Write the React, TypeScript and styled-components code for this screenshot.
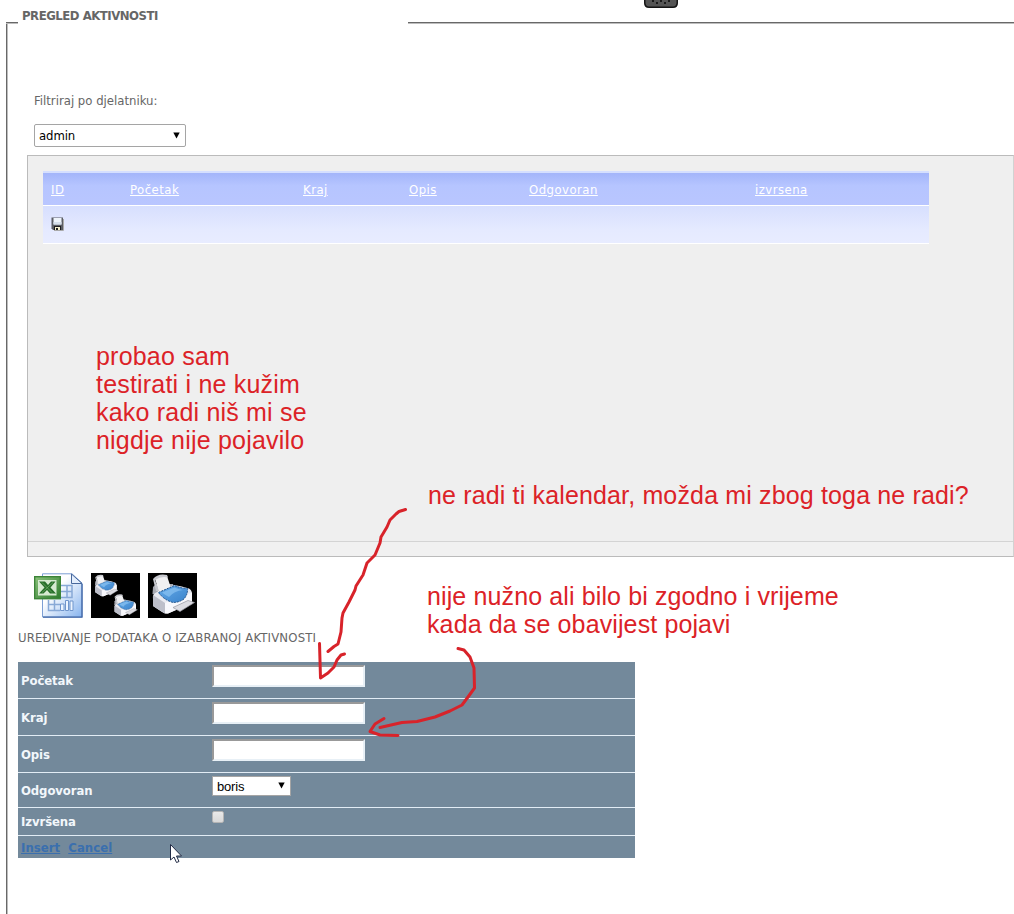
import React from "react";
import styled, { createGlobalStyle } from "styled-components";

const GlobalStyle = createGlobalStyle`
  * { box-sizing: border-box; }
  html, body { margin: 0; background: #fff; overflow: hidden; }
  body { font-family: "DejaVu Sans Condensed", "DejaVu Sans", Tahoma, sans-serif; font-stretch: condensed; font-size: 13px; color: #666; }
`;

const Page = styled.div`
  position: relative;
  width: 1014px;
  height: 914px;
  overflow: hidden;
`;

const DrawerHandle = styled.svg`
  position: absolute;
  left: 644px;
  top: 0;
  display: block;
`;

const Frame = styled.main`
  display: flex;
  flex-direction: column;
  width: 1030px;
  height: 920px;
  padding-left: 6px;
`;

const FrameTop = styled.header`
  display: flex;
  align-items: flex-end;
  flex: none;
  height: 24px;
`;

const FrameLine = styled.span<{ $width?: number }>`
  flex: ${(p) => (p.$width ? `0 0 ${p.$width}px` : "1")};
  height: 2px;
  background: #bdbdbd;
  border-top: 1px solid #686868;
`;

const Legend = styled.h1`
  flex: 0 0 390px;
  height: 24px;
  margin: 0;
  padding: 8px 0 0 4px;
  font-size: 13px;
  line-height: 16px;
  font-weight: bold;
  letter-spacing: -0.47px;
  color: #666;
`;

const FrameBody = styled.div`
  flex: 1;
  border-left: 1px solid #686868;
  box-shadow: inset 1px 0 #bdbdbd;
  padding: 69px 0 0 12px;
`;

const Filter = styled.div`
  display: flex;
  flex-direction: column;
  align-items: flex-start;
  gap: 15px;
  margin-left: 15px;
`;

const FilterLabel = styled.label`
  line-height: 16px;
`;

const SelectBox = styled.span<{ $width: number; $height: number }>`
  display: flex;
  position: relative;
  width: ${(p) => p.$width}px;
  height: ${(p) => p.$height}px;
`;

const Select = styled.select<{ $arial?: boolean }>`
  appearance: none;
  width: 100%;
  height: 100%;
  padding: 0 0 0 4px;
  border: 1px solid #a5a5a5;
  border-radius: ${(p) => (p.$arial ? 0 : 2)}px;
  background: #fff;
  color: #000;
  font-family: ${(p) => (p.$arial ? '"Liberation Sans", Arial, sans-serif' : "inherit")};
  font-size: 13px;
  letter-spacing: ${(p) => (p.$arial ? -0.2 : -0.1)}px;
`;

const Arrow = styled.svg`
  position: absolute;
  right: 6px;
  top: 50%;
  margin-top: -4px;
`;

const GridPanel = styled.section`
  display: flex;
  flex-direction: column;
  width: 987px;
  height: 402px;
  margin: 8px 0 0 8px;
  border: 1px solid #bbb;
  border-right-color: #d2d2d2;
  background: #efefef;
`;

const GridArea = styled.div`
  flex: 1;
  padding: 15px 0 0 15px;
`;

const PagerStrip = styled.div`
  height: 15px;
  border-top: 1px solid #d4d4d4;
  background: #f1f1f1;
`;

const Table = styled.div`
  width: 886px;
`;

const TableHead = styled.div`
  display: grid;
  grid-template-columns: 79px 173px 106px 120px 226px 1fr;
  align-items: center;
  height: 35px;
  padding: 2px 0 0 8px;
  border-top: 2px solid #d5dfff;
  border-bottom: 1px solid #fff;
  background: linear-gradient(#a3b5fa, #b6c5ff 40%, #b9c6ff);
`;

const SortLink = styled.a`
  color: #fff;
  text-decoration: underline;
  line-height: 16px;
  letter-spacing: 0.46px;
  justify-self: start;
`;

const TableRow = styled.div`
  display: flex;
  height: 38px;
  padding: 11px 8px;
  border-bottom: 1px solid #fff;
  background: linear-gradient(#d7dffe, #e5eaff 65%, #e8ecff);
`;

const Tools = styled.div`
  display: flex;
  gap: 8px;
  margin: 16px 0 0 15px;
  height: 45px;
`;

const FormTitle = styled.h2`
  margin: 12px 0 0 -1px;
  font-size: 13px;
  font-weight: normal;
  line-height: 16px;
  letter-spacing: 0.18px;
`;

const Form = styled.form`
  width: 617px;
  margin: 16px 0 0 -1px;
  background: #73899b;
  color: #fff;
`;

const FormRow = styled.div<{ $height: number; $top?: number }>`
  display: grid;
  grid-template-columns: 191px 1fr;
  height: ${(p) => p.$height}px;
  padding: 3px 0 0 3px;
  border-bottom: 1px solid #e2ecf5;
  & > label { padding-top: ${(p) => p.$top ?? 8}px; }
`;

const FieldLabel = styled.label`
  font-weight: bold;
  line-height: 16px;
  letter-spacing: -0.1px;
  color: #f2f7fb;
`;

const TextInput = styled.input`
  width: 153px;
  height: 22px;
  border: 2px solid;
  border-color: #999 #e8f0f6 #e8f0f6 #999;
  background: #fff;
  outline: none;
`;

const CheckBox = styled.input`
  appearance: none;
  width: 12px;
  height: 12px;
  margin: 0;
  border: 1px solid #b5b5b5;
  border-radius: 2px;
  background: linear-gradient(#e9e9e9, #d9d9d9);
`;

const Commands = styled.div`
  display: flex;
  gap: 8px;
  height: 22px;
  padding: 4px 0 0 3px;
`;

const Command = styled.a`
  color: #3a6fae;
  font-weight: bold;
  line-height: 16px;
  letter-spacing: 0.05px;
  text-decoration: underline;
`;

const Note = styled.p<{ $x: number; $y: number; $spacing: number }>`
  position: absolute;
  left: ${(p) => p.$x}px;
  top: ${(p) => p.$y}px;
  margin: 0;
  font-family: "Liberation Sans", Arial, sans-serif;
  font-size: 25px;
  line-height: 28px;
  letter-spacing: ${(p) => p.$spacing}px;
  color: #dc2227;
  white-space: pre;
`;

const Overlay = styled.svg`
  position: absolute;
  inset: 0;
  pointer-events: none;
`;

function DropArrow() {
  return (
    <Arrow width="7" height="7" viewBox="0 0 7 7">
      <path d="M0.3 0.5H6.7L3.5 6.5Z" fill="#000" />
    </Arrow>
  );
}

function Floppy() {
  return (
    <svg width="13" height="14" viewBox="0 0 13 14">
      <path d="M1 0.5H12V13H2L0.5 11.5V0.5Z" fill="#5a5d64" />
      <path d="M12.5 2V13.5H3" stroke="#aaa" fill="none" />
      <rect x="2.5" y="1" width="8" height="6.5" fill="#eef4fb" />
      <path d="M2.5 5h8V7.500h-8Z" fill="#d5dfeb" />
      <rect x="3" y="9" width="7" height="4" fill="#1d1d1f" />
      <rect x="4" y="10" width="5" height="3" fill="#f4f0d0" />
      <rect x="5" y="11" width="2" height="2" fill="#222" />
    </svg>
  );
}

function ExcelIcon() {
  return (
    <svg width="49" height="45" viewBox="0 0 49 45">
      <defs>
        <linearGradient id="sheet" x2="1" y2="1">
          <stop offset=".35" stopColor="#fff" />
          <stop offset="1" stopColor="#86b3ee" />
        </linearGradient>
        <linearGradient id="green" x2="1" y2="1">
          <stop stopColor="#8cc27c" />
          <stop offset="1" stopColor="#2c7a2c" />
        </linearGradient>
      </defs>
      <path d="M8.5 .8H38L48 10V44H8.5Z" fill="url(#sheet)" stroke="#7d9fd4" />
      <path d="M9 44.200H48V11" fill="none" stroke="#3f66a6" strokeWidth="1.3" />
      <path d="M37.5 1V10.5H48Z" fill="#e4eefc" stroke="#48689c" />
      <path d="M27 12.500H38V24.500H27M27 18.500H38M33 12.500V24.500M14.500 27V37.500H26M14.500 31.500H26M20.500 27V37.500" fill="none" stroke="#88a9d6" strokeWidth="1.500" />
      <path d="M26.500 37.500V31H30V37.500ZM31.500 37.500V27.500H34.500V37.500ZM36 37.500V28H39V37.500Z" fill="#eef5ff" stroke="#6f95cc" />
      <rect x=".7" y="3.700" width="25.600" height="22" fill="url(#green)" stroke="#3c8438" strokeWidth="1.400" />
      <rect x="4" y="7" width="18.500" height="15.500" fill="#d6ead0" />
      <path d="M5 8.500H11L14 12L17 8.500H21.500L16.500 14.500L22 20.500H16L13 17L9.500 20.500H5L10.500 14.500Z" fill="#286f2a" />
      <path d="M8 9.500L18 19.500M19 9.500L8 19.500" stroke="#6dab66" strokeWidth=".8" />
    </svg>
  );
}

function PrinterShape() {
  return (
    <g>
      <path d="M4.500 21L5 14L8 11L25 11L27 18L12 23Z" fill="#a9abb3" />
      <path d="M5 26Q4 21 9 19L26 12Q34 13 41 15.500Q44 17 44 21V30L20 40.500Q17 41 14 39L5 33Z" fill="#e9eaf1" />
      <path d="M5 22L17 30V40.500L5 33Z" fill="#bdbfca" />
      <path d="M17 30L44 19.500V30L20 40.500H17Z" fill="#f8f8fc" />
      <path d="M7 6Q12 1.500 19 3L23 15L10 20Q10 13 7 6Z" fill="#f0f0f2" />
      <path d="M5 6Q10 0 19 2L20 4.500Q13 3 7 7L11 18L8 18Z" fill="#c8c9cf" />
      <path d="M10.500 19.500L26.500 12.500Q32 15 39.500 15.500Q40 21 36 26Q31 29.500 25 29.500Q16 27 10.500 19.500Z" fill="url(#blueGlass)" stroke="#1d4f88" strokeDasharray="2 1" />
      <path d="M14 19.500L26.500 14.500Q30 16 35 17Q26 18 21 24Q17 22 14 19.500Z" fill="#94c9f5" opacity=".6" />
      <path d="M25 34.500L40 27.500L46.500 29.500L32 38.500Z" fill="#dddde3" stroke="#96969f" strokeWidth=".7" />
    </g>
  );
}

function PrintIcon({ pair }: { pair?: boolean }) {
  return (
    <svg width="49" height="45" viewBox="0 0 49 45">
      <defs>
        <linearGradient id="blueGlass" x2="1" y2="1">
          <stop stopColor="#65abe9" />
          <stop offset="1" stopColor="#3b83cb" />
        </linearGradient>
      </defs>
      <rect width="49" height="45" fill="#000" />
      {pair ? (
        <>
          <g transform="translate(1.500 1) scale(.55)"><PrinterShape /></g>
          <g transform="translate(20.800 20.500) scale(.55)"><PrinterShape /></g>
        </>
      ) : (
        <PrinterShape />
      )}
    </svg>
  );
}

const columns = ["ID", "Početak", "Kraj", "Opis", "Odgovoran", "izvrsena"];
const textFields = ["Početak", "Kraj", "Opis"];

export default function App() {
  return (
    <Page>
      <GlobalStyle />
      <DrawerHandle width="34" height="8" viewBox="0 0 34 8">
        <path d="M0 0H34V3Q34 8 29 8H5Q0 8 0 3Z" fill="#151515" />
        <path d="M1.500 0H32.500V3Q32 6.500 29 6.500H5Q2 6.500 1.500 3Z" fill="#555" />
        <path d="M8 0h2v2h-2ZM16 0h2v2h-2ZM24 0h2v2h-2ZM12 2h2v2h-2ZM20 2h2v2h-2Z" fill="#191919" />
      </DrawerHandle>
      <Frame>
        <FrameTop>
          <FrameLine $width={12} />
          <Legend>PREGLED AKTIVNOSTI</Legend>
          <FrameLine />
        </FrameTop>
        <FrameBody>
          <Filter>
            <FilterLabel htmlFor="worker">Filtriraj po djelatniku:</FilterLabel>
            <SelectBox $width={152} $height={23}>
              <Select id="worker"><option>admin</option></Select>
              <DropArrow />
            </SelectBox>
          </Filter>
          <GridPanel>
            <GridArea>
              <Table>
                <TableHead>
                  {columns.map((c) => <SortLink key={c}>{c}</SortLink>)}
                </TableHead>
                <TableRow><Floppy /></TableRow>
              </Table>
            </GridArea>
            <PagerStrip />
          </GridPanel>
          <Tools>
            <ExcelIcon />
            <PrintIcon pair />
            <PrintIcon />
          </Tools>
          <FormTitle>UREĐIVANJE PODATAKA O IZABRANOJ AKTIVNOSTI</FormTitle>
          <Form>
            {textFields.map((name) => (
              <FormRow key={name} $height={37}>
                <FieldLabel>{name}</FieldLabel>
                <TextInput />
              </FormRow>
            ))}
            <FormRow $height={35} $top={7}>
              <FieldLabel>Odgovoran</FieldLabel>
              <SelectBox $width={79} $height={20}>
                <Select $arial><option>boris</option></Select>
                <DropArrow />
              </SelectBox>
            </FormRow>
            <FormRow $height={28} $top={3}>
              <FieldLabel>Izvršena</FieldLabel>
              <CheckBox type="checkbox" />
            </FormRow>
            <Commands>
              <Command>Insert</Command>
              <Command>Cancel</Command>
            </Commands>
          </Form>
        </FrameBody>
      </Frame>
      <Note $x={96} $y={342} $spacing={0.2}>{"probao sam\ntestirati i ne kužim\nkako radi niš mi se\nnigdje nije pojavilo"}</Note>
      <Note $x={428} $y={481} $spacing={0.15}>ne radi ti kalendar, možda mi zbog toga ne radi?</Note>
      <Note $x={427} $y={582} $spacing={0.12}>{"nije nužno ali bilo bi zgodno i vrijeme\nkada da se obavijest pojavi"}</Note>
      <Overlay width="1014" height="914" viewBox="0 0 1014 914">
        <g fill="none" stroke="#d8232a" strokeWidth="3" strokeLinecap="round" strokeLinejoin="round">
          <path d="M405.500 509.500L399 511.500L396 514L390 520L387 527L381 537L380 543L375 555L367 563L363 575L356 586L355 590L349 602L343 613L342 618L341 632L338 644L334 646.500L328 651.500" />
          <path d="M319.500 643.500L320.500 678L328 673L334 667L337 660L341 655L344.500 654" />
          <path d="M458 648.500L464 650L470 657L474 668L474.500 688L468 697L462 705L450 711L435 717L417 721.500L402 722.500L380 727.500" />
          <path d="M384 718.500L375 724L370 731.500L380 735L398 735.500" />
        </g>
        <path d="M170.500 844.500V860L174 857L176.500 862.500L179 861.500L176.500 856H181.500Z" fill="#fff" stroke="#222b45" />
      </Overlay>
    </Page>
  );
}
